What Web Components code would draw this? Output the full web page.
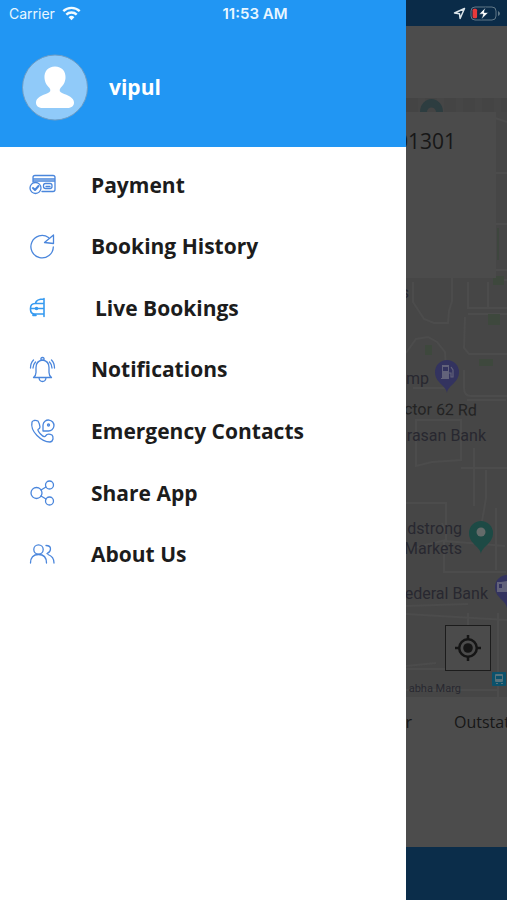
<!DOCTYPE html>
<html lang="en">
<head>
  <meta charset="UTF-8">
  <meta name="viewport" content="width=device-width, initial-scale=1.0">
  <title>Menu</title>
  <style>
    body { margin: 0; font-family: "Open Sans", "Noto Sans", sans-serif; }
  </style>
</head>
<body>
  <app-shell>
    <status-bar slot="status"></status-bar>
    <side-drawer slot="drawer">
      <user-header slot="header">vipul</user-header>
      <menu-item icon="payment">Payment</menu-item>
      <menu-item icon="history">Booking History</menu-item>
      <menu-item icon="live" class="indent">Live Bookings</menu-item>
      <menu-item icon="bell">Notifications</menu-item>
      <menu-item icon="phone">Emergency Contacts</menu-item>
      <menu-item icon="share">Share App</menu-item>
      <menu-item icon="people">About Us</menu-item>
    </side-drawer>
    <home-screen>
      <map-view slot="map">
        <map-label style="--right: 98px; --top: 185px">s</map-label>
        <map-label style="--right: 78px; --top: 271px">mp</map-label>
        <map-label style="--right: 30px; --top: 302px; --ink: #232323; --tilt: 1deg">ctor 62 Rd</map-label>
        <map-label style="--right: 21px; --top: 328px">rasan Bank</map-label>
        <map-label style="--right: 45px; --top: 421px">dstrong<br>Markets</map-label>
        <map-label style="--right: 19px; --top: 486px">ederal Bank</map-label>
        <map-label style="--right: 46px; --top: 581px; --size: 11px">abha Marg</map-label>
      </map-view>
    </home-screen>
  </app-shell>

  <template id="shell-tpl">
    <style>
      :host { display: grid; grid-template-columns: minmax(0, 4fr) minmax(0, 1fr); min-height: 100vh; position: relative; overflow: hidden; }
      /* the status bar lies over both columns */
      ::slotted(status-bar) { position: absolute; top: 0; left: 0; right: 0; z-index: 2; }
    </style>
    <slot name="status"></slot>
    <slot name="drawer"></slot>
    <slot></slot>
  </template>

  <template id="status-tpl">
    <style>
      :host { display: grid; grid-template-columns: 1fr auto 1fr; align-items: center; height: 27px; padding: 0 6px 0 9px; color: #e8f6ff; font: 14px/16px Inter, "Liberation Sans", sans-serif; box-sizing: border-box; }
      div { display: flex; align-items: center; gap: 7px; }
      .end { justify-content: flex-end; gap: 4px; }
      b { font-size: 15px; font-weight: 600; }
      svg { display: block; }
    </style>
    <div>
      <span>Carrier</span>
      <svg width="19" height="15" viewBox="0 0 19 15" fill="none" stroke="#f2fbff" stroke-width="2.4">
        <path d="M1.3 5.2a11.7 11.7 0 0 1 16.4 0M4.3 8.6a7.4 7.4 0 0 1 10.4 0"/>
        <path d="M9.5 14.2 6.6 11.2a4.2 4.2 0 0 1 5.8 0z" fill="#f2fbff" stroke="none"/>
      </svg>
    </div>
    <b>11:53 AM</b>
    <div class="end">
      <svg width="13" height="13" viewBox="0 0 13 13" fill="none" stroke="#dce5ea" stroke-width="1.5" stroke-linejoin="round"><path d="M11.5 1.5 1.5 6l5 .8.6 4.7z"/></svg>
      <svg width="31" height="15" viewBox="0 0 31 15">
        <rect x="1" y="1" width="25" height="13" rx="4" fill="none" stroke="#617887"/>
        <rect x="2.6" y="2.8" width="4.5" height="9.4" rx="1.5" fill="#e83a3b"/>
        <path d="M28 5v5q2-1 2-2.500T28 5z" fill="#617887"/>
        <path d="M15.500 1.500 9 8.200h4L11.200 13.500 18.500 6.400h-4.300z" fill="#fff" stroke="#0a2b47" stroke-width=".7"/>
      </svg>
    </div>
  </template>

  <template id="drawer-tpl">
    <style>
      :host { display: block; background: #fff; z-index: 1; }
      nav { display: grid; grid-auto-rows: 1fr; height: 431px; padding: 7px 0; }
    </style>
    <slot name="header"></slot>
    <nav aria-label="Main"><slot></slot></nav>
  </template>

  <template id="user-tpl">
    <style>
      :host { display: flex; align-items: center; gap: 21px; height: 147px; padding: 27px 22px 0; box-sizing: border-box; background: #2196f3; color: #fff; font-weight: 700; font-size: 21px; line-height: 28px; }
      svg { display: block; flex: none; }
    </style>
    <svg width="66" height="67" viewBox="0 0 66 67">
      <circle cx="33" cy="33.500" r="32.500" fill="#90caf9" stroke="#6f9dc4"/>
      <path d="M33 12.500c-7 0-11 5-10.500 11.500.4 5 2.500 7.500 5 10 1.500 2 1 4-1.500 5-6 2.500-12 4.500-12 9.500 0 4 3 5.500 7 5.500h24c4 0 7-1.500 7-5.500 0-5-6-7-12-9.500-2.500-1-3-3-1.500-5 2.500-2.500 4.600-5 5-10C44 17.500 40 12.500 33 12.500z" fill="#fff"/>
    </svg>
    <slot></slot>
  </template>

  <template id="item-tpl">
    <style>
      :host { display: grid; }
      a { display: flex; align-items: center; gap: 34px; padding: 0 28px; color: #1c1c1c; text-decoration: none; font-weight: 700; font-size: 21px; line-height: 28px; white-space: nowrap; }
      :host(.indent) a { gap: 38px; }
      svg { flex: none; fill: none; stroke: #4a86dc; stroke-width: 1.3; stroke-linecap: round; stroke-linejoin: round; }
    </style>
    <a href="#"><svg width="29" height="28" viewBox="0 0 29 28" aria-hidden="true"></svg><slot></slot></a>
  </template>

  <template id="home-tpl">
    <style>
      :host { display: flex; flex-direction: column; min-width: 0; overflow: hidden; background: #4c4c4c; color: #171717; }
      header { height: 26px; background: #0a2b48; }
      .bar { height: 72px; }
      .map { display: grid; flex: 1; }
      .rides { display: flex; justify-content: space-between; height: 150px; padding-top: 14px; box-sizing: border-box; font-size: 16px; line-height: 22px; white-space: nowrap; }
      .rides span + span { flex: none; width: 53px; }
      footer { height: 53px; background: #0b2d4a; }
    </style>
    <header></header>
    <div class="bar"></div>
    <div class="map"><slot name="map"></slot></div>
    <div class="rides"><span>r</span><span>Outstation</span></div>
    <footer></footer>
  </template>

  <template id="map-tpl">
    <style>
      :host { display: block; position: relative; overflow: hidden; background: #464646; }
      .streets { position: absolute; top: 0; right: 0; }
      .card { position: relative; display: flex; justify-content: flex-end; height: 166px; margin: 14px 11px 0 0; padding: 15px 40px 0 0; box-sizing: border-box; background: #4b4b4b; font-size: 21px; line-height: 28px; white-space: nowrap; }
      button { position: absolute; right: 16px; bottom: 26px; width: 46px; height: 46px; padding: 0; border: 1px solid #1c1c1c; background: #4b4b4b; display: grid; place-items: center; }
    </style>
    <svg class="streets" width="101" height="600" viewBox="0 0 101 600" fill="none" stroke="#4c4c4c" stroke-width="2">
      <path d="M0 7h101" stroke="#444" stroke-width="14" stroke-dasharray="12 7"/>
      <path d="M89 20 101 24M90 75h11M90 126h11M90 172h11M90 182h11"/>
      <path d="M92 130v32" stroke="#3e463e"/>
      <path d="M7 184v20l11 17 10 4h14l1-12 3-10v-23M62 184v26h20v-26M62 210h39M62 216h39M59 219l-1 31 5 6h38M0 255l10-14 12-2 9 5 8 10 1 18v18H7M58 272v18q0 8 7 8h36M61 302h39M10 342v-20h45v28M10 342v26l16-4 29-2v-30M55 370h46M80 372v28l-5 29M0 405h40v37l-33 8M68 350v58M36 425l4 10M39 443l60 5M38 443v31h62M90 410v62M0 508l62-2M0 516l101 6M62 515v12M92 515v85M0 568l30-3M0 571h40M0 592h92"/>
      <path d="M87 178h11v9H87zM82 216h12v11H82zM19 247h7v10h-7zM73 261h14v7H73z" fill="#3e483d" stroke="none"/>
      <path d="M14 14a11.500 13 0 0 1 23 0h-7a4.500 4.500 0 0 0-9 0z" fill="#2d3d40" stroke="none"/>
      <!-- place pins -->
      <g stroke="none">
        <path d="M41 295c-1-8-12-10-12-21a12 12 0 0 1 24 0c0 11-11 13-12 21z" fill="#33335f"/>
        <path d="M36 267h7v14h-8v-1h1zM37 269v4h5v-4z" fill="#62627a" fill-rule="evenodd"/>
        <path d="M43 275h2v4h2v-7l-2-3" fill="none" stroke="#62627a" stroke-width="1.200"/>
        <path d="M75 456c-1-8-12-10-12-21a12 12 0 0 1 24 0c0 11-11 13-12 21z" fill="#1d4a45"/>
        <circle cx="75" cy="434" r="4.500" fill="#646b6a"/>
        <path d="M101 510c-1-8-12-10-12-21a12 12 0 0 1 12-12z" fill="#33335f"/>
        <path d="M91 484h4l6-1v11H91z" fill="#62627a"/><path d="M93 486h3v4h-3z" fill="#33335f"/>
        <rect x="86" y="574" width="14" height="14" rx="1" fill="#0b526c"/>
        <rect x="89" y="576" width="8" height="8" rx="1" fill="#58727b"/><path d="M90 578h6v3h-6z" fill="#0b526c"/><path d="M90 585h2v1h-2zM95 585h2v1h-2z" fill="#58727b"/>
      </g>
    </svg>
    <slot></slot>
    <div class="card">01301</div>
    <button aria-label="My location">
      <svg width="28" height="28" viewBox="0 0 28 28" fill="none" stroke="#151515" stroke-width="2.500"><circle cx="14" cy="14" r="8.800"/><circle cx="14" cy="14" r="4.800" fill="#151515" stroke="none"/><path d="M14 1v5M14 22v5M1 14h5M22 14h5"/></svg>
    </button>
  </template>

  <template id="label-tpl">
    <style>
      :host { position: absolute; right: var(--right); top: var(--top); color: var(--ink, #282830); font: var(--size, 16px)/20px Roboto, sans-serif; text-align: right; white-space: nowrap; transform: rotate(var(--tilt, 0deg)); }
    </style>
    <slot></slot>
  </template>

  <script>
    const icons = {
      payment: '<path d="M5 11V6.500q0-2 2-2h18q2 0 2 2v12q0 2-2 2H14M5 10h22M5 8h22"/><rect x="15.500" y="12.500" width="8.500" height="5" rx="2"/><path d="M18 15.500h4"/><circle cx="7.500" cy="17" r="5.500"/><path d="m5 17 2 2 3.500-4" stroke-width="2"/>',
      history: '<path d="M20.500 5.500A11.200 11.200 0 1 0 25.300 15M16.500 10.500l9-7.500v8.500z"/>',
      live: '<g stroke="#369af0" stroke-width="1.600"><path d="M16 4.500v18M16 9.500H7q-4.500 0-4.500 5v1q0 4.500 4.500 4.500h9M7.500 9q1-4 8.500-4M3 14.500h13M5 20.500v1h3"/><circle cx="8.500" cy="14.500" r="1"/></g>',
      bell: '<path d="M5.500 22.500q2.500-2 2.500-5v-5q0-6.500 6.500-7.500 6.500 1 6.500 7.500v5q0 3 2.500 5zM13 5q-.5-2.500 1.500-2.500T16 5M11 23q.5 3.500 3.500 3.500T18 23M5.500 5Q2.500 8 2.500 13M7.500 7Q5 9.500 5 13M23.500 5q3 3 3 8M21.500 7Q24 9.500 24 13"/>',
      phone: '<path d="M4 5q-1.500 7 5 13.500t13 6.500q2.500-.5 3-3 .2-3-1-4-3-1.500-5-.5l-2 2q-1.500.8-4.500-2.500T10 12.500q2-1 2-2.500-.5-3.500-2-6Q8 3 6 3.500 4.500 4 4 5z"/><path d="M15 14V8a5.500 5.500 0 1 1 5 6z"/><circle cx="20.500" cy="8" r="1"/>',
      share: '<circle cx="8.500" cy="14" r="5.500"/><circle cx="21.500" cy="6" r="4"/><circle cx="21.500" cy="22" r="4"/><path d="m13 11 5-3M13 17l5 3"/>',
      people: '<circle cx="10.500" cy="9.500" r="4.700"/><path d="M2.500 23q0-8.500 8-8.500t8 8.500M18 5.500q4.500 0 4.500 3.500 0 3-3.500 4.500M20 14.500q6 2 6 8.500"/>'
    };

    function define(name, tplId, setup) {
      customElements.define(name, class extends HTMLElement {
        connectedCallback() {
          if (this.shadowRoot) return;
          this.attachShadow({ mode: 'open' });
          this.shadowRoot.append(document.getElementById(tplId).content.cloneNode(true));
          if (setup) setup(this);
        }
      });
    }

    define('app-shell', 'shell-tpl');
    define('status-bar', 'status-tpl');
    define('side-drawer', 'drawer-tpl');
    define('user-header', 'user-tpl');
    define('menu-item', 'item-tpl', function (el) {
      el.shadowRoot.querySelector('svg').innerHTML = icons[el.getAttribute('icon')];
    });
    define('home-screen', 'home-tpl');
    define('map-view', 'map-tpl');
    define('map-label', 'label-tpl');
  </script>
</body>
</html>
